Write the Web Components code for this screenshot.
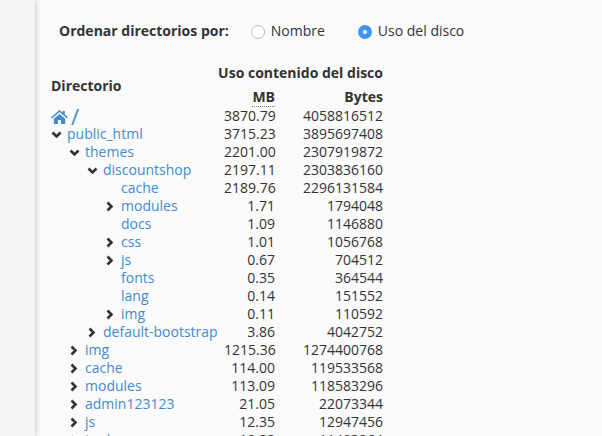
<!DOCTYPE html>
<html>
<head>
<meta charset="utf-8">
<style>
  html, body { margin: 0; height: 436px; overflow: hidden; background: #fafafa; }
  body { font: 14px/18px "Open Sans", sans-serif; color: #333; }
</style>
</head>
<body>
<disk-usage-page></disk-usage-page>
<script>
// [name, depth, expander (open|closed|none), MB, bytes]
const ROWS = [
  ['public_html', 0, 'open', '3715.23', '3895697408'],
  ['themes', 1, 'open', '2201.00', '2307919872'],
  ['discountshop', 2, 'open', '2197.11', '2303836160'],
  ['cache', 3, 'none', '2189.76', '2296131584'],
  ['modules', 3, 'closed', '1.71', '1794048'],
  ['docs', 3, 'none', '1.09', '1146880'],
  ['css', 3, 'closed', '1.01', '1056768'],
  ['js', 3, 'closed', '0.67', '704512'],
  ['fonts', 3, 'none', '0.35', '364544'],
  ['lang', 3, 'none', '0.14', '151552'],
  ['img', 3, 'closed', '0.11', '110592'],
  ['default-bootstrap', 2, 'closed', '3.86', '4042752'],
  ['img', 1, 'closed', '1215.36', '1274400768'],
  ['cache', 1, 'closed', '114.00', '119533568'],
  ['modules', 1, 'closed', '113.09', '118583296'],
  ['admin123123', 1, 'closed', '21.05', '22073344'],
  ['js', 1, 'closed', '12.35', '12947456'],
  ['tools', 1, 'closed', '10.88', '11403264']
];

class SortRadio extends HTMLElement {
  constructor() {
    super();
    this.attachShadow({ mode: 'open' });
    this.shadowRoot.innerHTML = `
      <style>
        :host { display: inline-flex; align-items: center; gap: 6px; color: #333; }
        .dot { width: 14px; height: 14px; box-sizing: border-box; border-radius: 50%; background: #fff; border: 1px solid #b5b5b5; margin-top: 2px; }
        :host([checked]) .dot { background: #fff; border: 5px solid #3f94f5; }
      </style>
      <span class="dot"></span><slot></slot>
    `;
  }
}
customElements.define('sort-radio', SortRadio);

class DirRow extends HTMLElement {
  constructor() {
    super();
    this.attachShadow({ mode: 'open' });
  }

  connectedCallback() {
    const depth = +this.getAttribute('depth');
    const kind = this.getAttribute('kind');
    const icons = {
      open: '<path d="M1.5 3.5 5.5 7.5 9.5 3.5" />',
      closed: '<path d="M2.5 1.5 6.5 5.5 2.5 9.5" />'
    };
    this.shadowRoot.innerHTML = `
      <style>
        :host { display: grid; grid-template-columns: 173px 51px 108px; height: 18px; }
        .name { display: flex; align-items: center; white-space: nowrap; padding-left: ${16 + depth * 18}px; position: relative; }
        svg { position: absolute; left: ${depth * 18}px; top: 4px; width: 11px; height: 11px; fill: none; stroke: #333; stroke-width: 2.6; }
        span { color: #428bca; }
        .num { text-align: right; }
      </style>
      <div class="name">
        ${kind === 'none' ? '' : `<svg viewBox="0 0 11 11">${icons[kind]}</svg>`}
        <span>${this.getAttribute('name')}</span>
      </div>
      <div class="num">${this.getAttribute('mb')}</div>
      <div class="num">${this.getAttribute('bytes')}</div>
    `;
  }
}
customElements.define('dir-row', DirRow);

class DiskUsagePage extends HTMLElement {
  constructor() {
    super();
    this.attachShadow({ mode: 'open' });
  }

  connectedCallback() {
    const rows = ROWS.map(r =>
      `<dir-row name="${r[0]}" depth="${r[1]}" kind="${r[2]}" mb="${r[3]}" bytes="${r[4]}"></dir-row>`
    ).join('');

    this.shadowRoot.innerHTML = `
      <style>
        :host { display: flex; height: 436px; overflow: hidden; }
        .side { width: 35px; flex: none; background: #f5f5f5; box-shadow: 1px 0 5px rgba(0,0,0,.2); }
        main { flex: 1; padding: 21px 0 0 16px; }
        .sort { display: flex; align-items: center; padding-left: 8px; height: 20px; }
        .sort b { margin-right: 22px; }
        .sort sort-radio + sort-radio { margin-left: 33px; }
        .head { display: grid; grid-template-columns: 116px 108px 108px; margin-top: 23px; font-weight: 700; }
        .dir { grid-row: 1 / 3; align-self: center; }
        .group { grid-column: 2 / 4; text-align: right; height: 24px; }
        .unit { text-align: right; height: 19px; }
        .mb { justify-self: end; border-bottom: 1px dotted #777; height: 18px; }
        .root { display: grid; grid-template-columns: 173px 51px 108px; height: 18px; }
        .root .home { display: flex; align-items: center; gap: 3px; color: #428bca; }
        .root .home span { font-size: 22px; line-height: 18px; }
        .root svg { width: 17px; height: 15px; fill: #428bca; }
        .num { text-align: right; }
      </style>
      <div class="side"></div>
      <main>
        <div class="sort">
          <b>Ordenar directorios por:</b>
          <sort-radio>Nombre</sort-radio>
          <sort-radio checked>Uso del disco</sort-radio>
        </div>
        <div class="head">
          <div class="dir">Directorio</div>
          <div class="group">Uso contenido del disco</div>
          <div class="unit mb">MB</div>
          <div class="unit">Bytes</div>
        </div>
        <div class="root">
          <div class="home">
            <svg viewBox="0 0 17 15"><path d="M8.5 1 11.6 3.7V2h2.2v3.6L17 8.4 16 9.5 8.5 3 1 9.5 0 8.4ZM2.8 9.8 8.5 4.9 14.2 9.8V15H10V11H7V15H2.8Z"/></svg>
            <span>/</span>
          </div>
          <div class="num">3870.79</div>
          <div class="num">4058816512</div>
        </div>
        ${rows}
      </main>
    `;
  }
}
customElements.define('disk-usage-page', DiskUsagePage);
</script>
</body>
</html>
